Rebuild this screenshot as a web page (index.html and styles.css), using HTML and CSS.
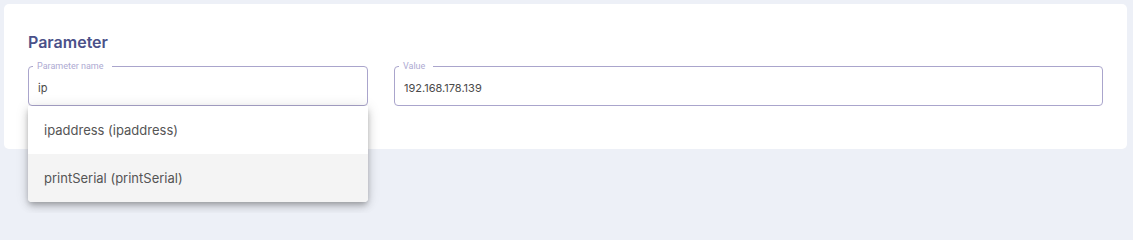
FILE: index.html
```html
<!DOCTYPE html>
<html lang="en">
<head>
<meta charset="utf-8">
<title>Parameter</title>
<link rel="stylesheet" href="styles.css">
</head>
<body>
<div class="page">
  <section class="card">
    <h2 class="title">Parameter</h2>
    <div class="row">
      <div class="field">
        <fieldset class="outline">
          <legend class="label">Parameter name</legend>
          <input class="control" type="text" value="ip">
        </fieldset>
        <ul class="menu">
          <li class="option">ipaddress (ipaddress)</li>
          <li class="option option-hover">printSerial (printSerial)</li>
        </ul>
      </div>
      <div class="field">
        <fieldset class="outline">
          <legend class="label">Value</legend>
          <input class="control" type="text" value="192.168.178.139">
        </fieldset>
      </div>
    </div>
  </section>
</div>
</body>
</html>
```

FILE: styles.css
```css
html, body {
  margin: 0;
  padding: 0;
  height: 213px;
  overflow: hidden;
}
body {
  background: #edf0f7;
  font-family: Inter, "Noto Sans", sans-serif;
}
.page {
  padding: 4px 6px 0 4px;
}
.card {
  background: #ffffff;
  border-radius: 5px;
  padding: 26px 24px 43px 24px;
}
.title {
  margin: 0 0 7px 0;
  font-size: 16px;
  line-height: 24px;
  font-weight: 600;
  color: #4b5189;
}
.row {
  display: grid;
  grid-template-columns: 340px 1fr;
  column-gap: 26px;
}
.field {
  position: relative;
}
.outline {
  margin: 0;
  padding: 0;
  border: 1px solid #aaa5cc;
  border-radius: 4px;
  min-width: 0;
}
.label {
  margin-left: 4px;
  padding: 0 8px 0 4px;
  font-family: Roboto, "Liberation Sans", sans-serif;
  font-size: 9px;
  line-height: 11px;
  color: #aeaad2;
}
.control {
  display: block;
  box-sizing: border-box;
  width: 100%;
  height: 33px;
  margin: 0;
  padding: 0 8px 1px 9px;
  border: 0;
  outline: none;
  background: transparent;
  font-family: Inter, "Noto Sans", sans-serif;
  font-size: 11px;
  color: #4a4a4a;
}
.menu {
  position: absolute;
  top: 100%;
  left: 0;
  right: 0;
  margin: 0;
  padding: 0;
  list-style: none;
  background: #ffffff;
  border-radius: 0 0 4px 4px;
  overflow: hidden;
  box-shadow: 0 3px 5px -1px rgba(0,0,0,0.2), 0 5px 8px 0 rgba(0,0,0,0.14), 0 1px 14px 0 rgba(0,0,0,0.12);
  z-index: 10;
}
.option {
  height: 48px;
  line-height: 49px;
  padding: 0 16px;
  font-size: 13px;
  color: #555555;
}
.option-hover {
  background: #f4f4f4;
}
```
